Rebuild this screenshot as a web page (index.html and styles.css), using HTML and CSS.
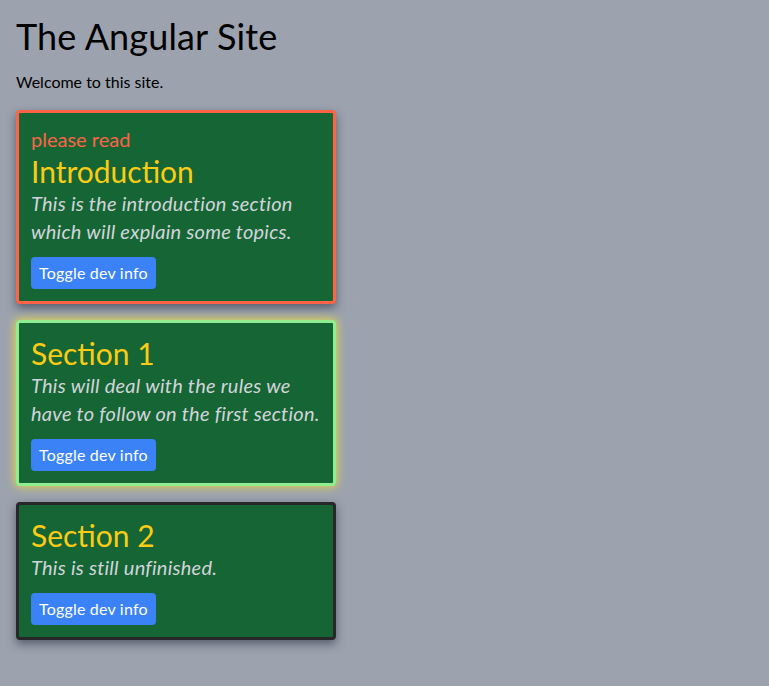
FILE: index.html
```html
<!DOCTYPE html>
<html lang="en">
<head>
<meta charset="utf-8">
<title>The Angular Site</title>
<link rel="stylesheet" href="styles.css">
</head>
<body>
<main class="page">
  <h1 class="site-title">The Angular Site</h1>
  <p class="welcome">Welcome to this site.</p>

  <section class="card card-important">
    <div class="card-label">please read</div>
    <h2 class="card-title">Introduction</h2>
    <p class="card-text">This is the introduction section which will explain some topics.</p>
    <button class="btn" type="button">Toggle dev info</button>
  </section>

  <section class="card card-glow">
    <h2 class="card-title">Section 1</h2>
    <p class="card-text">This will deal with the rules we have to follow on the first section.</p>
    <button class="btn" type="button">Toggle dev info</button>
  </section>

  <section class="card card-dark">
    <h2 class="card-title">Section 2</h2>
    <p class="card-text">This is still unfinished.</p>
    <button class="btn" type="button">Toggle dev info</button>
  </section>
</main>
</body>
</html>
```

FILE: styles.css
```css
html, body {
  margin: 0;
  padding: 0;
}

body {
  background: #9ca3af;
  font-family: Lato, "Noto Sans", "Liberation Sans", sans-serif;
  color: #000;
  min-height: 686px;
}

.page {
  padding: 16px;
  display: flex;
  flex-direction: column;
  align-items: flex-start;
}

.site-title {
  margin: 0;
  font-size: 36px;
  line-height: 40px;
  font-weight: 400;
  letter-spacing: 0.15px;
}

.welcome {
  margin: 14px 0 16px;
  font-size: 16px;
  line-height: 24px;
}

.card {
  box-sizing: border-box;
  width: 320px;
  background: #166534;
  border: 3px solid #222;
  border-radius: 4px;
  padding: 12px;
  margin-bottom: 16px;
  display: flex;
  flex-direction: column;
  align-items: flex-start;
  box-shadow: 0 4px 10px rgba(17, 24, 39, 0.5);
}

.card-important {
  border-color: #ff6347;
}

.card-glow {
  border-color: #90ee90;
  box-shadow: 0 0 10px 1px rgba(234, 222, 60, 0.9);
}

.card-dark {
  border-color: #27272a;
}

.card-label {
  color: #ff6347;
  font-size: 20px;
  line-height: 28px;
}

.card-title {
  margin: 0;
  color: #facc15;
  font-size: 30px;
  line-height: 36px;
  font-weight: 400;
}

.card-text {
  margin: 0;
  color: #d1d5db;
  font-size: 20px;
  line-height: 28px;
  font-style: italic;
  letter-spacing: 0.25px;
}

.btn {
  margin-top: 12px;
  background: #3b82f6;
  color: #fff;
  border: none;
  border-radius: 4px;
  padding: 4px 8px;
  font-family: inherit;
  font-size: 16px;
  line-height: 24px;
  letter-spacing: 0.2px;
  cursor: pointer;
}
```
